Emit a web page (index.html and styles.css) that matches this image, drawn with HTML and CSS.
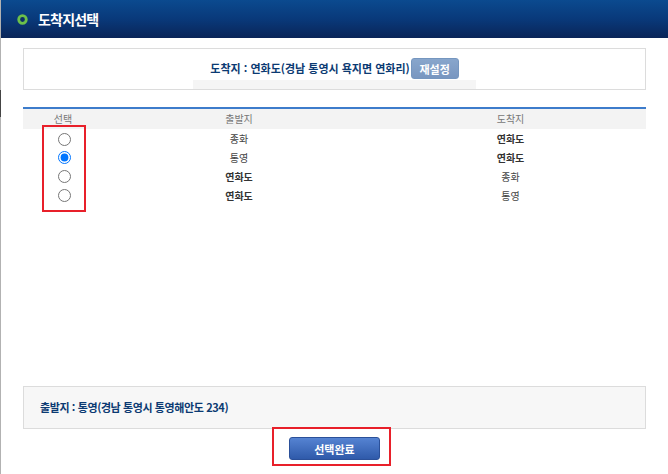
FILE: index.html
```html
<!DOCTYPE html>
<html lang="ko">
<head>
<meta charset="utf-8">
<title>도착지선택</title>
<link rel="stylesheet" href="styles.css">
</head>
<body>
<div class="page">
  <header class="header">
    <svg class="bullet" width="11" height="11" viewBox="0 0 11 11"><circle cx="5.5" cy="5.5" r="3.8" fill="#0b2f66" stroke="#6cc04a" stroke-width="2.8"/></svg>
    <h1 class="title">도착지선택</h1>
  </header>
  <div class="content">
    <div class="dest-box">
      <div class="dest-row">
        <span class="dest-text">도착지 : 연화도(경남 통영시 욕지면 연화리)</span>
        <button class="btn-reset" type="button">재설정</button>
      </div>
      <div class="dest-strip"></div>
    </div>
    <div class="table-area">
      <table class="route-table">
        <colgroup><col class="c1"><col class="c2"><col class="c3"></colgroup>
        <thead>
          <tr><th>선택</th><th>출발지</th><th>도착지</th></tr>
        </thead>
        <tbody>
          <tr><td class="sel"><input type="radio" name="r"></td><td>종화</td><td class="b">연화도</td></tr>
          <tr><td class="sel"><input type="radio" name="r" checked></td><td>통영</td><td class="b">연화도</td></tr>
          <tr><td class="sel"><input type="radio" name="r"></td><td class="b">연화도</td><td>종화</td></tr>
          <tr><td class="sel"><input type="radio" name="r"></td><td class="b">연화도</td><td>통영</td></tr>
        </tbody>
      </table>
    </div>
    <div class="origin-box">
      <span class="origin-text">출발지 : 통영(경남 통영시 통영해안도 234)</span>
    </div>
    <div class="actions">
      <button class="btn-done" type="button">선택완료</button>
    </div>
  </div>
  <div class="mark mark-radio"></div>
  <div class="mark mark-btn"></div>
  <div class="edge-dark"></div>
</div>
</body>
</html>
```

FILE: styles.css
```css
* { box-sizing: border-box; }
html, body { margin: 0; padding: 0; background: #fff; }
body {
  font-family: "Noto Sans CJK KR", "Noto Sans", sans-serif;
  width: 668px;
  height: 474px;
  overflow: hidden;
}
.page {
  position: relative;
  height: 474px;
  border-left: 1px solid #b2b2b2;
}
.header {
  height: 38px;
  background: linear-gradient(to bottom, #0b4a8f 0%, #09397a 50%, #0a2558 100%);
  display: flex;
  align-items: center;
  padding-left: 16px;
}
.bullet { display: block; margin-top: 1px; }
.title {
  margin: 0 0 0 10px;
  color: #fff;
  font-size: 14px;
  font-weight: bold;
  letter-spacing: -0.8px;
  line-height: 1;
}
.content {
  padding: 0 22px 0 22px;
}
.dest-box {
  margin-top: 10px;
  height: 42px;
  border: 1px solid #dcdcdc;
  display: flex;
  flex-direction: column;
  align-items: center;
  padding-top: 9px;
}
.dest-row {
  display: flex;
  align-items: center;
  height: 21px;
}
.dest-text {
  color: #0b3a72;
  font-size: 11px;
  font-weight: bold;
  letter-spacing: 0;
  line-height: 1;
}
.btn-reset {
  margin-left: 1px;
  width: 48px;
  height: 21px;
  padding: 0;
  border: 1px solid #7596bf;
  border-radius: 3px;
  background: linear-gradient(to bottom, #88a6cc, #7896c0);
  color: #fff;
  font-family: inherit;
  font-size: 11px;
  font-weight: bold;
}
.dest-strip {
  margin-top: 1px;
  width: 283px;
  height: 9px;
  background: #f5f5f5;
}
.table-area {
  margin-top: 17px;
  height: 279px;
}
.route-table {
  width: 100%;
  border-collapse: collapse;
  table-layout: fixed;
  border-top: 2px solid #3d7ccb;
}
.c1 { width: 80px; }
.c2 { width: 272px; }
.route-table th {
  height: 21px;
  background: #f3f3f3;
  color: #777;
  font-size: 10px;
  font-weight: normal;
  text-align: center;
  padding: 0;
  line-height: 1;
}
.route-table td {
  height: 19px;
  padding: 0;
  text-align: center;
  color: #444;
  font-size: 10px;
  line-height: 1;
  vertical-align: middle;
}
.route-table td.sel { padding-left: 3px; }
.route-table tbody tr:first-child td { padding-top: 1px; }
.route-table td.b { font-weight: bold; color: #333; }
.route-table input[type="radio"] {
  margin: 0;
  width: 13px;
  height: 13px;
  vertical-align: middle;
}
.origin-box {
  height: 43px;
  border: 1px solid #dcdcdc;
  background: #f7f7f7;
  display: flex;
  align-items: center;
  padding-left: 16px;
}
.origin-text {
  color: #0b3a72;
  font-size: 11px;
  font-weight: bold;
  letter-spacing: -0.4px;
  line-height: 1;
}
.actions {
  display: flex;
  justify-content: center;
  margin-top: 8px;
}
.btn-done {
  width: 91px;
  height: 23px;
  padding: 0;
  border: 1px solid #2b5099;
  border-radius: 3px;
  background: linear-gradient(to bottom, #5583d2, #2f5aaa);
  color: #fff;
  font-family: inherit;
  font-size: 11px;
  font-weight: bold;
}
.mark {
  position: absolute;
  border: 2px solid #e8202a;
}
.mark-radio { left: 41px; top: 125px; width: 44px; height: 87px; }
.mark-btn { left: 271px; top: 427px; width: 119px; height: 39px; }
.edge-dark {
  position: absolute;
  left: -1px;
  top: 90px;
  width: 1px;
  height: 27px;
  background: #444;
}
```
